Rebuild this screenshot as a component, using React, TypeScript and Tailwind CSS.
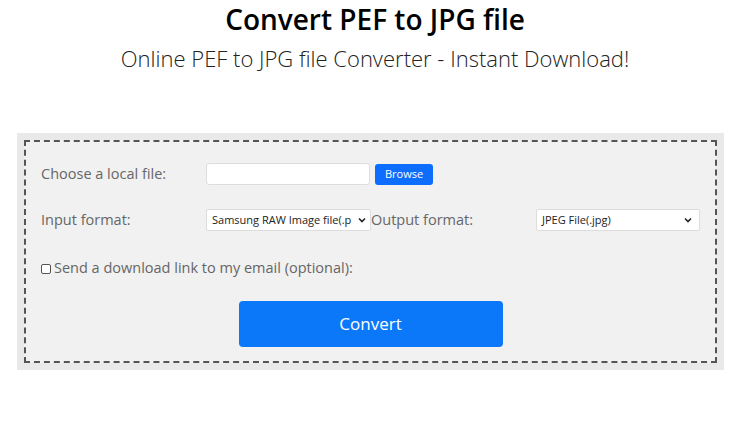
import React from "react";

const font = { fontFamily: '"Open Sans", "Noto Sans", sans-serif' };

// Converter form for PEF -> JPG
const App: React.FC = () => {
  return (
    <div className="min-h-[433px] w-[750px] bg-white" style={font}>
      <header className="flex flex-col items-center pt-[2px]">
        <h1 className="text-[28px] font-semibold leading-[34px] text-black">
          Convert PEF to JPG file
        </h1>
        <p className="mt-[7px] text-[22px] font-light leading-[30px] text-[#222]">
          Online PEF to JPG file Converter - Instant Download!
        </p>
      </header>

      <div className="ml-[17px] mt-[60px] w-[707px] bg-[#e9e9e9] p-[7px]">
        <div className="border-2 border-dashed border-[#555] bg-[#f1f1f1] px-[15px] pb-[14px] pt-[21px]">
          <div className="grid grid-cols-[165px_330px] items-center text-[14.5px] text-[#666]">
            <span>Choose a local file:</span>
            <div className="flex items-center gap-[5px]">
              <input
                type="text"
                className="h-[22px] w-[164px] rounded-[3px] border border-[#ddd] bg-white"
              />
              <button className="h-[21px] w-[58px] rounded-[3px] bg-[#0d6efd] text-[11px] text-white">
                Browse
              </button>
            </div>
          </div>

          <div className="mt-[24px] grid grid-cols-[165px_165px_165px_164px] items-center text-[14.5px] text-[#666]">
            <span>Input format:</span>
            <div className="flex h-[22px] w-[165px] items-center justify-between rounded-[2px] border border-[#ddd] bg-white pl-[5px] pr-[3px] text-[11px] text-[#222]">
              <span className="whitespace-nowrap">Samsung RAW Image file(.p</span>
              <svg width="10" height="10" viewBox="0 0 10 10">
                <path d="M2 3.5 L5 6.5 L8 3.5" stroke="#222" strokeWidth="1.6" fill="none" />
              </svg>
            </div>
            <span>Output format:</span>
            <div className="flex h-[22px] w-[164px] items-center justify-between rounded-[2px] border border-[#ddd] bg-white pl-[5px] pr-[6px] text-[11px] text-[#222]">
              <span>JPEG File(.jpg)</span>
              <svg width="10" height="10" viewBox="0 0 10 10">
                <path d="M2 3.5 L5 6.5 L8 3.5" stroke="#222" strokeWidth="1.6" fill="none" />
              </svg>
            </div>
          </div>

          <label className="mt-[26px] flex items-center text-[14.5px] text-[#666]">
            <span className="mr-[3px] mt-[2px] h-[10px] w-[10px] rounded-[2px] border border-[#555] bg-white" />
            Send a download link to my email (optional):
          </label>

          <div className="mt-[22px] flex justify-center">
            <button className="h-[46px] w-[264px] rounded-[4px] bg-[#0b78fa] text-[17px] text-white">
              Convert
            </button>
          </div>
        </div>
      </div>
    </div>
  );
};

export default App;
